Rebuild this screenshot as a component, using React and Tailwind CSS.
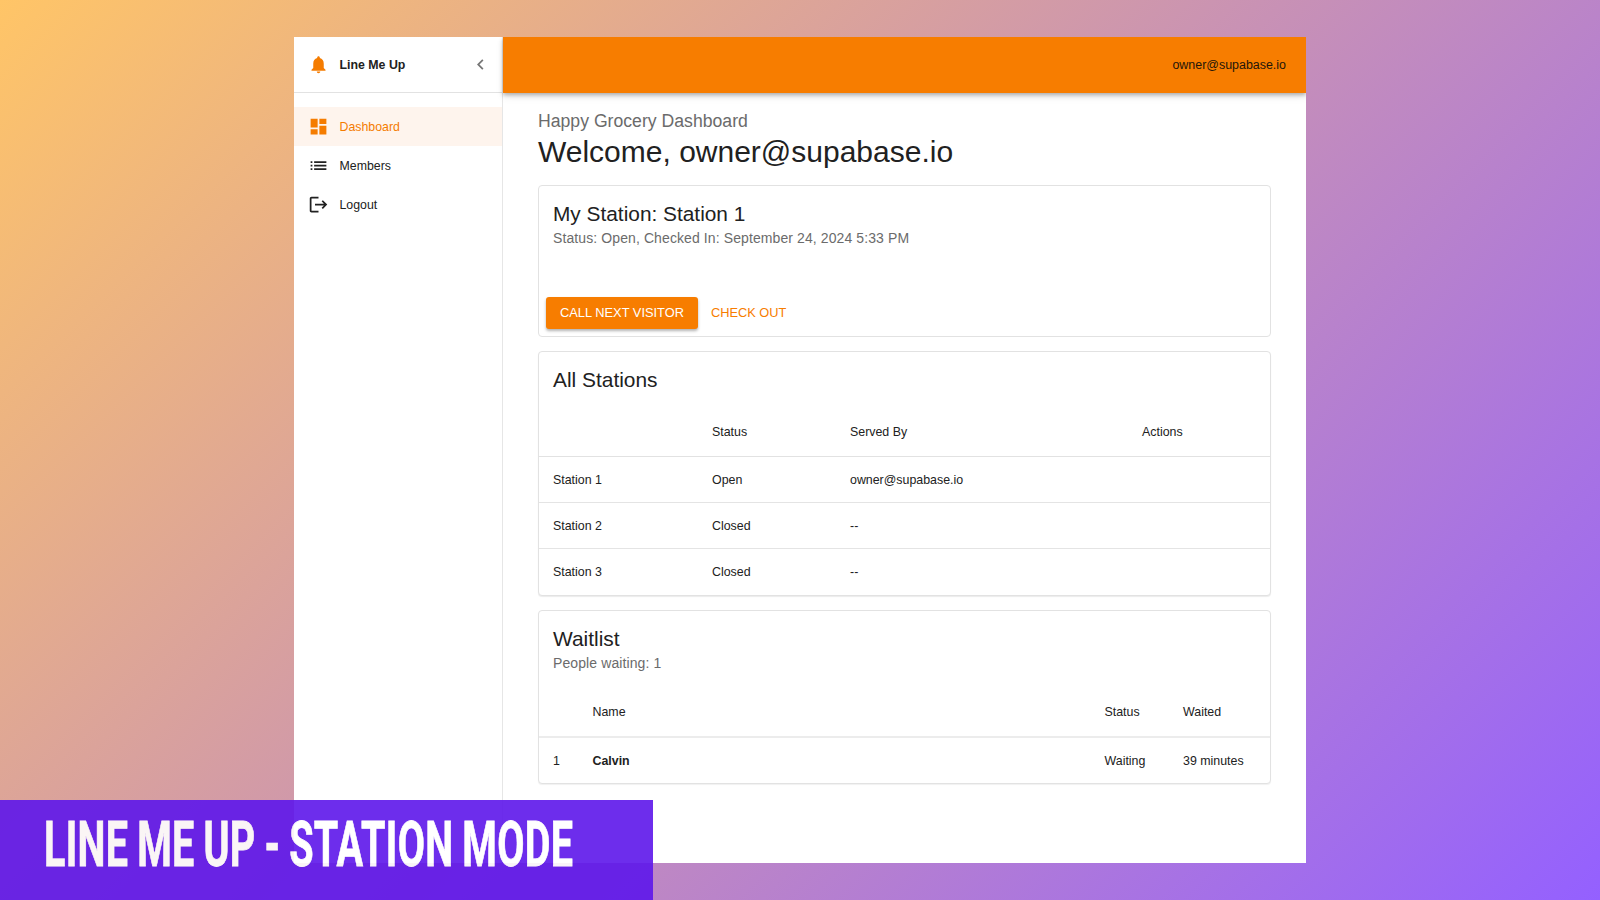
import React from "react";
import { MdNotifications, MdDashboard, MdList, MdLogout, MdChevronLeft } from "react-icons/md";

function NavItem({ icon: Icon, label, active }) {
  return (
    <li className={active ? "flex h-[39px] items-center bg-[#fef4ed] pl-[14px] text-[#f57c00]" : "flex h-[39px] items-center pl-[14px]"}>
      <Icon className="mr-[10.5px] size-[21px] shrink-0" />
      <span className="pt-[2px] text-[12.35px]">{label}</span>
    </li>
  );
}

function Card({ className, children }) {
  return <section className={"rounded-[4px] border border-[#e2e2e2] bg-white " + className}>{children}</section>;
}

const stations = [
  ["Station 1", "Open", "owner@supabase.io"],
  ["Station 2", "Closed", "--"],
  ["Station 3", "Closed", "--"],
];

export default function App() {
  return (
    <div className="relative h-[900px] w-[1600px] overflow-hidden bg-linear-[135deg,#ffc567_0%,#9460ff_100%] pt-[37px] pl-[294px] font-['Liberation_Sans',Arial,sans-serif] text-[#212121]">
      <div className="flex h-[826px] w-[1012px] overflow-hidden bg-white">
        <aside className="w-[209px] shrink-0 border-r border-[#e6e6e6]">
          <div className="flex h-14 items-center border-b border-[#e2e2e2] pr-[11px] pl-[14px]">
            <MdNotifications className="mr-[10.5px] size-[21px] text-[#f57c00]" />
            <span className="flex-1 pt-[2px] text-[12.35px] font-bold">Line Me Up</span>
            <MdChevronLeft className="size-[21px] text-[#757575]" />
          </div>
          <ul className="pt-[14px]">
            <NavItem icon={MdDashboard} label="Dashboard" active />
            <NavItem icon={MdList} label="Members" />
            <NavItem icon={MdLogout} label="Logout" />
          </ul>
        </aside>

        <div className="flex min-w-0 flex-1 flex-col">
          <header className="flex h-14 shrink-0 items-center justify-end bg-[#f77d00] pr-[20px] shadow-[0_2px_4px_rgba(0,0,0,0.28),0_4px_8px_rgba(0,0,0,0.08)]">
            <span className="text-[12.45px] text-[#24160a]">owner@supabase.io</span>
          </header>

          <main className="pr-[35px] pl-[35px]">
            <p className="mt-[16px] text-[17.65px] leading-[24px] text-[#6b6b6b]">Happy Grocery Dashboard</p>
            <h1 className="text-[30px] leading-[38px]">Welcome, owner@supabase.io</h1>

            <Card className="mt-[14px] flex h-[152px] flex-col">
              <h2 className="mt-[15px] ml-[14px] text-[20.85px] leading-[26px]">My Station: Station 1</h2>
              <p className="ml-[14px] text-[14px] leading-[22px] tracking-[0.1px] text-[#6b6b6b]">Status: Open, Checked In: September 24, 2024 5:33 PM</p>
              <div className="mt-auto mb-[7px] ml-[7px] flex items-center">
                <button className="h-[32px] w-[152px] rounded-[3px] bg-[#f77d00] text-[12.85px] whitespace-nowrap text-white shadow-[0_2px_3px_rgba(0,0,0,0.3)]">CALL NEXT VISITOR</button>
                <button className="ml-[13px] text-[12.8px] text-[#f77d00]">CHECK OUT</button>
              </div>
            </Card>

            <Card className="mt-[14px] h-[245px] shadow-[0_1px_1px_rgba(0,0,0,0.08)]">
              <h2 className="mt-[15px] ml-[14px] text-[20.9px] leading-[26px]">All Stations</h2>
              <div className="mt-[15px] grid h-[49px] grid-cols-[159px_138px_292px_1fr] items-center border-b border-[#e2e2e2] pl-[14px] text-[12.4px]">
                <span />
                <span>Status</span>
                <span>Served By</span>
                <span>Actions</span>
              </div>
              {stations.map(([name, status, by]) => (
                <div key={name} className="grid h-[46px] grid-cols-[159px_138px_292px_1fr] items-center border-b border-[#e4e4e4] pt-[2px] pl-[14px] text-[12.4px] last:border-b-0 last:pt-px">
                  <span>{name}</span>
                  <span>{status}</span>
                  <span>{by}</span>
                  <span />
                </div>
              ))}
            </Card>

            <Card className="mt-[14px] h-[174px] shadow-[0_1px_1px_rgba(0,0,0,0.06)]">
              <h2 className="mt-[15px] ml-[14px] text-[20.9px] leading-[26px]">Waitlist</h2>
              <p className="ml-[14px] text-[14px] leading-[22px] tracking-[0.1px] text-[#6b6b6b]">People waiting: 1</p>
              <div className="mt-[13px] grid h-[51px] grid-cols-[39.5px_512px_78.5px_1fr] items-center border-b-2 border-[#ececec] pt-[2px] pl-[14px] text-[12.4px]">
                <span />
                <span>Name</span>
                <span>Status</span>
                <span>Waited</span>
              </div>
              <div className="grid h-[45px] grid-cols-[39.5px_512px_78.5px_1fr] items-center pt-px pl-[14px] text-[12.4px]">
                <span>1</span>
                <span className="font-bold">Calvin</span>
                <span>Waiting</span>
                <span>39 minutes</span>
              </div>
            </Card>
          </main>
        </div>
      </div>

      <div className="absolute bottom-0 left-0 flex h-[100px] w-[653px] items-center bg-[#5e17eb] pb-[10px] pl-[44px] opacity-90">
        <span className="origin-left scale-x-[0.624] font-['Liberation_Sans_Narrow','Roboto',sans-serif] text-[63.3px] leading-none font-bold tracking-[0.5px] whitespace-nowrap text-white [-webkit-text-stroke:0.8px_white] [word-spacing:-2px]">LINE ME UP - STATION MODE</span>
      </div>
    </div>
  );
}
